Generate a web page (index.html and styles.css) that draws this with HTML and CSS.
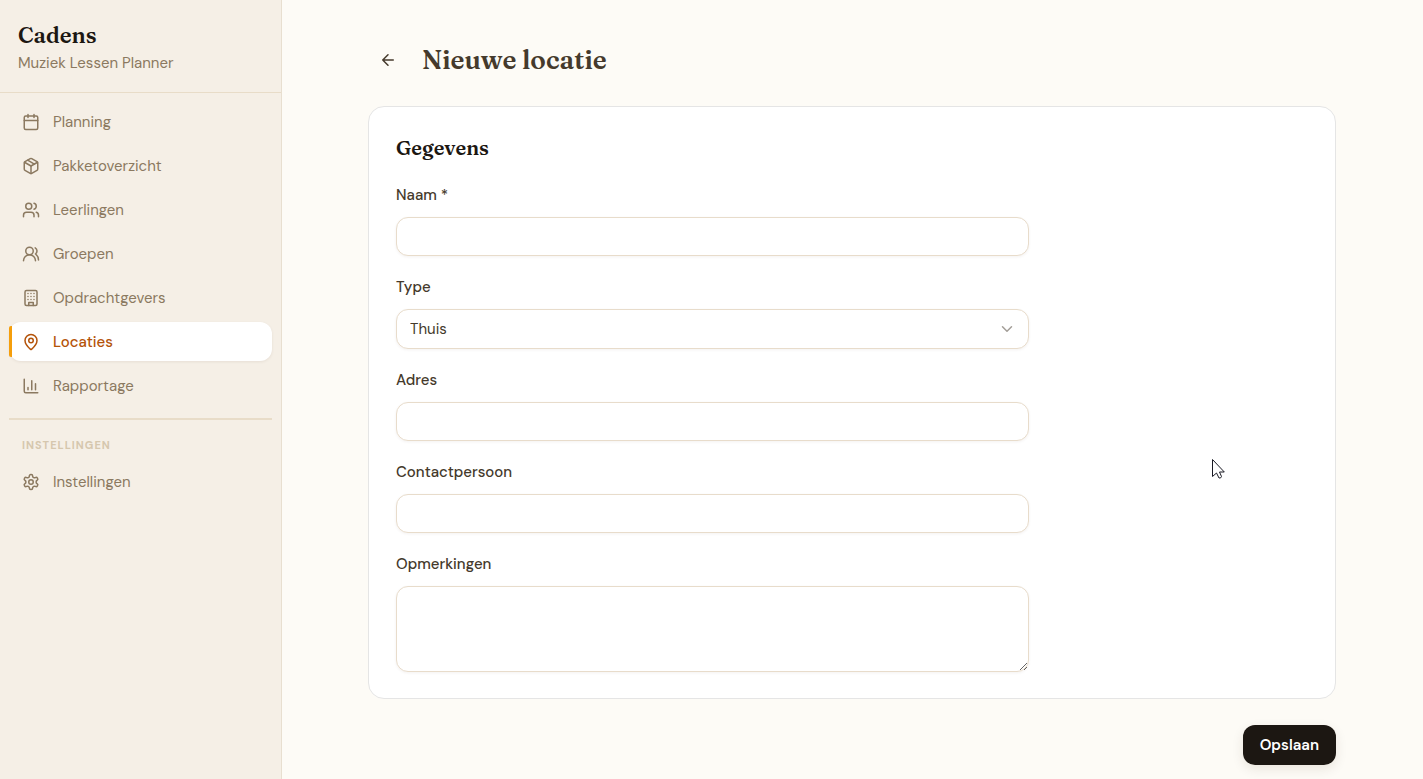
FILE: index.html
```html
<!DOCTYPE html>
<html lang="nl">
<head>
  <meta charset="UTF-8">
  <meta name="viewport" content="width=device-width, initial-scale=1.0">
  <title>Cadens - Nieuwe locatie</title>
  <link rel="stylesheet" href="styles.css">
</head>
<body>
  <div class="layout">
    <aside class="sidebar">
      <div class="brand">
        <div class="brand-name">Cadens</div>
        <div class="brand-sub">Muziek Lessen Planner</div>
      </div>

      <nav class="nav">
        <a href="#" class="nav-item">
          <svg class="icon" viewBox="0 0 24 24"><path d="M8 2v4M16 2v4M3 10h18"/><rect x="3" y="4" width="18" height="18" rx="2"/></svg>
          Planning
        </a>
        <a href="#" class="nav-item">
          <svg class="icon" viewBox="0 0 24 24"><path d="M11 21.73a2 2 0 0 0 2 0l7-4A2 2 0 0 0 21 16V8a2 2 0 0 0-1-1.73l-7-4a2 2 0 0 0-2 0l-7 4A2 2 0 0 0 3 8v8a2 2 0 0 0 1 1.73z"/><path d="M12 22V12"/><path d="M3.29 7 12 12l8.71-5"/><path d="m7.5 4.27 9 5.15"/></svg>
          Pakketoverzicht
        </a>
        <a href="#" class="nav-item">
          <svg class="icon" viewBox="0 0 24 24"><path d="M16 21v-2a4 4 0 0 0-4-4H6a4 4 0 0 0-4 4v2"/><circle cx="9" cy="7" r="4"/><path d="M22 21v-2a4 4 0 0 0-3-3.87"/><path d="M16 3.13a4 4 0 0 1 0 7.75"/></svg>
          Leerlingen
        </a>
        <a href="#" class="nav-item">
          <svg class="icon" viewBox="0 0 24 24"><path d="M18 21a8 8 0 0 0-16 0"/><circle cx="10" cy="8" r="5"/><path d="M22 20c0-3.37-2-6.5-4-8a5 5 0 0 0-.45-8.3"/></svg>
          Groepen
        </a>
        <a href="#" class="nav-item">
          <svg class="icon" viewBox="0 0 24 24"><rect x="4" y="2" width="16" height="20" rx="2"/><path d="M9 22v-4h6v4"/><path d="M8 6h.01M16 6h.01M12 6h.01M12 10h.01M12 14h.01M16 10h.01M16 14h.01M8 10h.01M8 14h.01"/></svg>
          Opdrachtgevers
        </a>
        <a href="#" class="nav-item active">
          <svg class="icon" viewBox="0 0 24 24"><path d="M20 10c0 4.993-5.539 10.193-7.399 11.799a1 1 0 0 1-1.202 0C9.539 20.193 4 14.993 4 10a8 8 0 0 1 16 0"/><circle cx="12" cy="10" r="3"/></svg>
          Locaties
        </a>
        <a href="#" class="nav-item">
          <svg class="icon" viewBox="0 0 24 24"><path d="M3 3v16a2 2 0 0 0 2 2h16"/><path d="M18 17V9M13 17V5M8 17v-3"/></svg>
          Rapportage
        </a>

        <div class="nav-section">
          <div class="nav-title">INSTELLINGEN</div>
          <a href="#" class="nav-item">
            <svg class="icon" viewBox="0 0 24 24"><path d="M12.22 2h-.44a2 2 0 0 0-2 2v.18a2 2 0 0 1-1 1.73l-.43.25a2 2 0 0 1-2 0l-.15-.08a2 2 0 0 0-2.73.73l-.22.38a2 2 0 0 0 .73 2.73l.15.1a2 2 0 0 1 1 1.72v.51a2 2 0 0 1-1 1.74l-.15.09a2 2 0 0 0-.73 2.73l.22.38a2 2 0 0 0 2.73.73l.15-.08a2 2 0 0 1 2 0l.43.25a2 2 0 0 1 1 1.73V20a2 2 0 0 0 2 2h.44a2 2 0 0 0 2-2v-.18a2 2 0 0 1 1-1.73l.43-.25a2 2 0 0 1 2 0l.15.08a2 2 0 0 0 2.73-.73l.22-.39a2 2 0 0 0-.73-2.73l-.15-.08a2 2 0 0 1-1-1.74v-.5a2 2 0 0 1 1-1.74l.15-.09a2 2 0 0 0 .73-2.73l-.22-.38a2 2 0 0 0-2.73-.73l-.15.08a2 2 0 0 1-2 0l-.43-.25a2 2 0 0 1-1-1.73V4a2 2 0 0 0-2-2z"/><circle cx="12" cy="12" r="3"/></svg>
            Instellingen
          </a>
        </div>
      </nav>
    </aside>

    <main class="main">
      <form class="page">
        <div class="page-header">
          <button type="button" class="back" aria-label="Terug">
            <svg class="icon" viewBox="0 0 24 24"><path d="m12 19-7-7 7-7M19 12H5"/></svg>
          </button>
          <h1>Nieuwe locatie</h1>
        </div>

        <div class="card">
          <h2>Gegevens</h2>
          <div class="fields">
            <div class="field">
              <label for="naam">Naam *</label>
              <input id="naam" type="text" required>
            </div>
            <div class="field">
              <label for="type">Type</label>
              <div class="select-wrap">
                <select id="type">
                  <option>Thuis</option>
                </select>
                <svg class="chevron" viewBox="0 0 24 24"><path d="m6 9 6 6 6-6"/></svg>
              </div>
            </div>
            <div class="field">
              <label for="adres">Adres</label>
              <input id="adres" type="text">
            </div>
            <div class="field">
              <label for="contact">Contactpersoon</label>
              <input id="contact" type="text">
            </div>
            <div class="field">
              <label for="opmerkingen">Opmerkingen</label>
              <textarea id="opmerkingen"></textarea>
            </div>
          </div>
        </div>

        <div class="actions">
          <button type="submit" class="save">Opslaan</button>
        </div>
      </form>
    </main>
  </div>

  <svg class="pointer" viewBox="0 0 13 20"><path d="M.5 .5V17.5L4.5 14L7 19Q9 19.500 9.500 17.500L7.500 13H12.300Z"/></svg>
</body>
</html>
```
FILE: styles.css
```css
* {
  box-sizing: border-box;
}
body {
  margin: 0;
  font-family: "DM Sans", Inter, sans-serif;
  font-size: 15px;
  line-height: 24px;
  color: #453a2c;
  background: #fdfbf6;
}
.layout {
  display: flex;
  min-height: 100vh;
}
h1, h2, .brand-name {
  margin: 0;
  font-family: Fraunces, "Liberation Serif", serif;
  font-weight: 600;
}
.icon {
  width: 18px;
  height: 18px;
  flex: none;
  fill: none;
  stroke: currentColor;
  stroke-width: 2;
  stroke-linecap: round;
  stroke-linejoin: round;
}

/* sidebar */
.sidebar {
  width: 282px;
  flex: none;
  background: #f5efe6;
  border-right: 1px solid #e8dfd0;
}
.brand {
  padding: 20px 18px 17px;
  border-bottom: 1px solid #e8dcc8;
}
.brand-name {
  font-size: 22px;
  line-height: 31px;
  color: #1c1712;
}
.brand-sub {
  color: #8b7960;
}
.nav {
  display: flex;
  flex-direction: column;
  gap: 5px;
  padding: 9px;
}
.nav-item {
  position: relative;
  display: flex;
  align-items: center;
  gap: 13px;
  height: 39px;
  padding: 0 13px;
  border-radius: 12px;
  color: #8b7960;
  text-decoration: none;
}
.nav-item.active {
  background: #fff;
  color: #b45309;
  font-weight: 500;
  box-shadow: 0 1px 3px rgba(60,40,10,0.08);
}
.nav-item.active::before {
  content: "";
  position: absolute;
  left: 0;
  top: 4px;
  bottom: 4px;
  width: 3px;
  border-radius: 2px 0 0 2px;
  background: #f59e0b;
}
.nav-section {
  margin-top: 8px;
  padding-top: 13px;
  border-top: 2px solid #e8dcc8;
}
.nav-title {
  padding: 0 13px;
  margin-bottom: 5px;
  font-size: 11px;
  font-weight: 700;
  letter-spacing: 1px;
  color: #d6c7ae;
}

/* page */
.main {
  flex: 1;
  min-width: 0;
  padding: 40px 36px 14px 35px;
}
.page {
  max-width: 968px;
  margin: 0 auto;
}
.page-header {
  display: flex;
  align-items: center;
  gap: 14px;
  margin-bottom: 26px;
}
.back {
  display: flex;
  align-items: center;
  justify-content: center;
  width: 40px;
  height: 40px;
  padding: 0;
  border: none;
  border-radius: 12px;
  background: none;
  color: #453a2c;
  cursor: pointer;
}
h1 {
  font-size: 26px;
  line-height: 40px;
  color: #453a2c;
}
.card {
  padding: 27px 27px 26px;
  background: #fff;
  border: 1px solid #e5e5e5;
  border-radius: 16px;
}
h2 {
  margin-bottom: 21px;
  font-size: 20px;
  line-height: 28px;
  color: #1c1712;
}
.fields {
  display: flex;
  flex-direction: column;
  gap: 19px;
  max-width: 633px;
}
.field {
  display: flex;
  flex-direction: column;
  gap: 10px;
}
label {
  font-weight: 500;
}
input, select, textarea {
  display: block;
  width: 100%;
  height: 39px;
  padding: 0 13px;
  font: inherit;
  color: #453a2c;
  background: #fff;
  border: 1px solid #e8dccb;
  border-radius: 12px;
  box-shadow: 0 1px 3px rgba(60,40,10,0.06);
}
select {
  height: 40px;
  appearance: none;
}
textarea {
  height: 86px;
  padding: 8px 13px;
  resize: vertical;
}
.select-wrap {
  position: relative;
}
.chevron {
  position: absolute;
  right: 13px;
  top: 11px;
  width: 18px;
  height: 18px;
  fill: none;
  stroke: #a39e98;
  stroke-width: 2;
  stroke-linecap: round;
  stroke-linejoin: round;
  pointer-events: none;
}
.actions {
  display: flex;
  justify-content: flex-end;
  margin-top: 26px;
}
.save {
  height: 40px;
  padding: 0 17px;
  font: inherit;
  font-weight: 600;
  color: #fff;
  background: #1c1712;
  border: none;
  border-radius: 12px;
  box-shadow: 0 4px 12px rgba(60,40,10,0.1);
  cursor: pointer;
}
.pointer {
  position: absolute;
  left: 1212px;
  top: 459px;
  width: 13px;
  height: 20px;
  fill: #fff;
  stroke: #1a1a24;
  stroke-width: 1;
  pointer-events: none;
}

@media (max-width: 768px) {
  .layout {
    flex-direction: column;
  }
  .sidebar {
    width: 100%;
  }
}
```
